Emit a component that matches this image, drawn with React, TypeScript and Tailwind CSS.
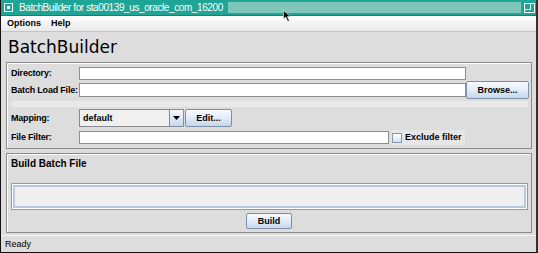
import React from "react";

const btn =
  "flex items-center justify-center border border-[#7f8fa6] rounded-[2px] bg-gradient-to-b from-[#f7faff] via-[#e2ecf8] to-[#c4d6ee] text-[9px] font-bold text-black leading-none";

function Label({ children }: { children: React.ReactNode }) {
  return (
    <div className="w-[68px] shrink-0 text-[9px] font-bold tracking-[-0.2px] text-black leading-none whitespace-nowrap">
      {children}
    </div>
  );
}

export default function App() {
  return (
    <div
      className="relative w-[538px] h-[253px] overflow-hidden bg-[#dddddd] border-l border-r-2 border-b border-l-[#111] border-r-[#333] border-b-[#111] flex flex-col"
      style={{ fontFamily: '"Liberation Sans", Arial, sans-serif' }}
    >
      {/* Title bar */}
      <div className="h-[16px] shrink-0 bg-[#1fa595] border-b border-[#197f74] flex items-center">
        <div className="ml-[3px] w-[9px] h-[9px] border border-white flex items-center justify-center">
          <div className="w-[3px] h-[3px] bg-white" />
        </div>
        <div className="ml-[6px] text-[10px] tracking-[-0.4px] text-white leading-none whitespace-nowrap">
          BatchBuilder for sta00139_us_oracle_com_16200
        </div>
        <div className="ml-auto w-[293px] h-[11px] bg-[#80c7bb]" />
        <svg className="ml-[3px] mr-[1px]" width="11" height="10" viewBox="0 0 11 10">
          <rect x="0.5" y="0.5" width="10" height="9" fill="none" stroke="#ffffff" />
          <path d="M0.5 6.5 H6.5 V0.5" fill="none" stroke="#ffffff" />
        </svg>
      </div>

      {/* Menu bar */}
      <div className="h-[16px] shrink-0 bg-gradient-to-b from-[#ffffff] to-[#e8e8e8] border-b border-[#c4c4c4] flex items-center text-[9px] font-bold text-black leading-none">
        <span className="ml-[6px]">Options</span>
        <span className="ml-[10px]">Help</span>
      </div>

      {/* Heading */}
      <div className="h-[30px] shrink-0 pt-[5px] pl-[7px]">
        <div
          className="text-[17px] leading-[20px] text-black"
          style={{ fontFamily: '"DejaVu Sans", sans-serif' }}
        >
          BatchBuilder
        </div>
      </div>

      {/* Panel 1 */}
      <div className="ml-[5px] w-[526px] h-[87px] shrink-0 border border-[#8a8a8a] shadow-[inset_1px_1px_0_#ffffff] flex flex-col pl-[4px] pt-[4px]">
        <div className="h-[13px] flex items-center">
          <Label>Directory:</Label>
          <div className="w-[387px] h-[13px] bg-white border border-[#8e8e8e]" />
        </div>
        <div className="mt-[1px] h-[18px] flex items-center">
          <Label>Batch Load File:</Label>
          <div className="w-[387px] h-[14px] bg-white border border-[#8e8e8e]" />
          <div className={btn + " w-[63px] h-[18px]"}>Browse...</div>
        </div>
        <div className="mt-[2px] h-[6px] w-[517px] bg-[#e9e9e9]" />
        <div className="mt-[2px] h-[18px] flex items-center">
          <Label>Mapping:</Label>
          <div className="w-[91px] h-[18px] bg-[#f0f0f0] border border-[#8a8a8a] flex items-center pl-[3px] text-[9px] font-bold leading-none">
            default
          </div>
          <div className="w-[14px] h-[18px] border border-l-0 border-[#7f8fa6] bg-gradient-to-b from-[#f7faff] to-[#c8d8ee] flex items-center justify-center">
            <svg width="7" height="4" viewBox="0 0 7 4">
              <path d="M0 0 H7 L3.5 4 Z" fill="#000" />
            </svg>
          </div>
          <div className={btn + " ml-[1px] w-[47px] h-[18px]"}>Edit...</div>
        </div>
        <div className="mt-[4px] h-[13px] flex items-center">
          <Label>File Filter:</Label>
          <div className="w-[310px] h-[13px] bg-white border border-[#8e8e8e]" />
          <div className="ml-[2px] h-[15px] pl-[1px] pr-[3px] flex items-center bg-[#e6e6e6]">
            <div className="w-[10px] h-[10px] border border-[#8797ae] bg-gradient-to-b from-[#ffffff] to-[#d6e2f2]" />
            <span className="ml-[3px] text-[9px] font-bold leading-none whitespace-nowrap">Exclude filter</span>
          </div>
        </div>
      </div>

      {/* Panel 2 */}
      <div className="mt-[4px] ml-[5px] w-[526px] h-[80px] shrink-0 border border-[#8a8a8a] shadow-[inset_1px_1px_0_#ffffff] flex flex-col pt-[4px]">
        <div className="pl-[4px] text-[10px] font-bold leading-[12px] text-black">Build Batch File</div>
        <div className="mt-[13px] ml-[4px] w-[517px] h-[27px] border border-[#9a9a9a] bg-white p-[1px]">
          <div className="w-full h-full border-2 border-[#b7c8de] bg-[#efefef]" />
        </div>
        <div className="mt-[3px] flex justify-center">
          <div className={btn + " w-[46px] h-[16px]"}>Build</div>
        </div>
      </div>

      {/* Status bar */}
      <div className="mt-[2px] flex-1 border-t border-[#f6f6f6] flex items-center pl-[4px] text-[9px] text-black leading-none">
        Ready
      </div>

      {/* Mouse cursor */}
      <svg className="absolute left-[282px] top-[10px]" width="11" height="13" viewBox="0 0 11 13">
        <path d="M0.5 0.5 L0.5 9 L2.8 7 L4.8 11.5 L6.3 10.8 L4.4 6.5 L7.5 6.5 Z" fill="#000" stroke="#fff" strokeWidth="0.6" />
      </svg>
    </div>
  );
}
